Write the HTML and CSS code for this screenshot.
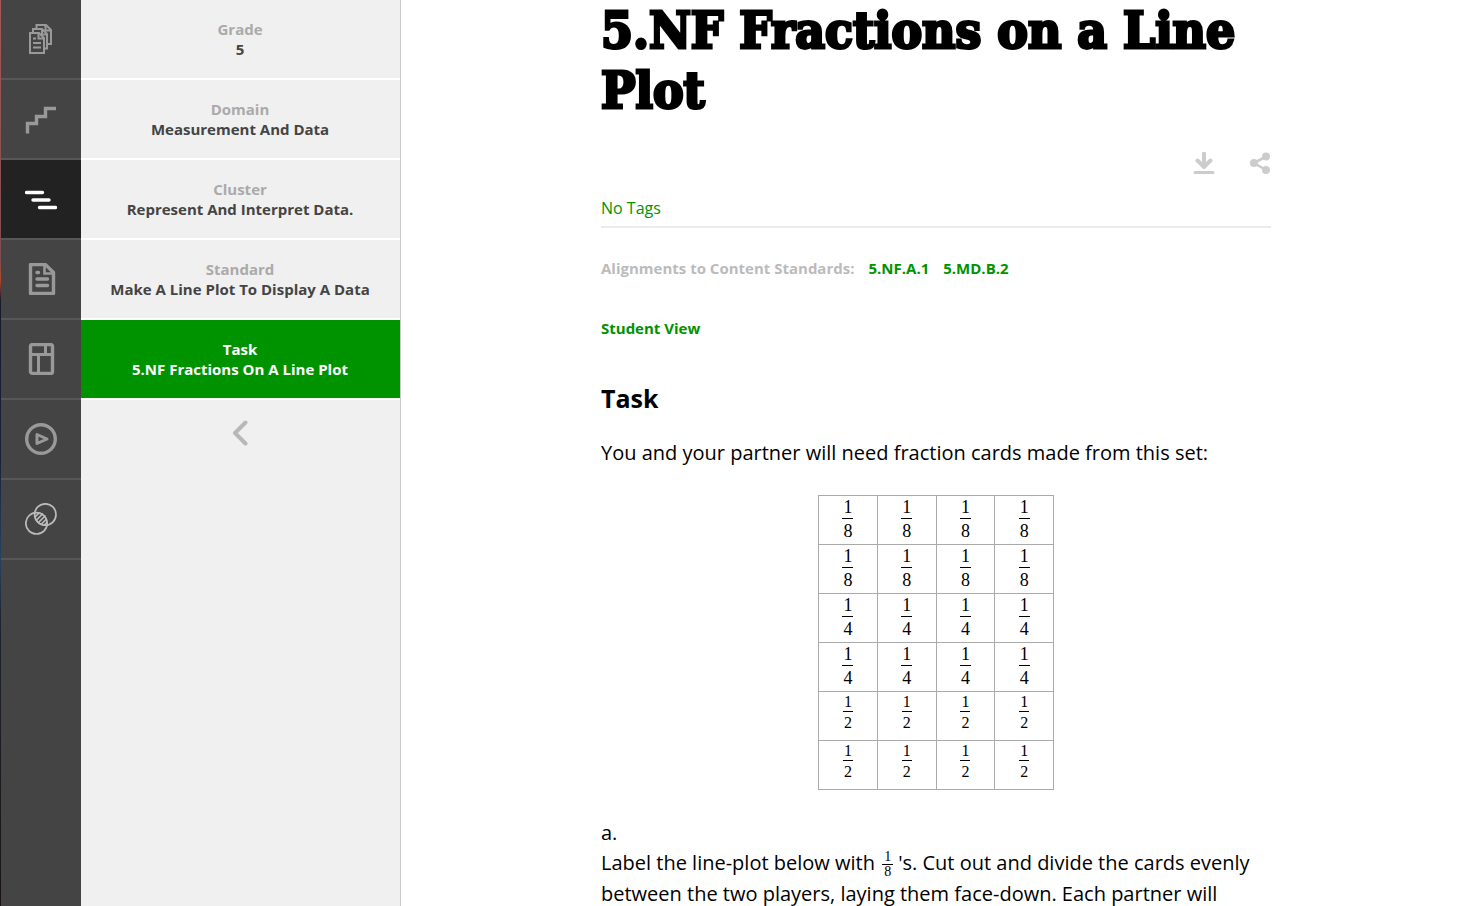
FILE: index.html
```html
<!DOCTYPE html>
<html lang="en">
<head>
<meta charset="utf-8">
<title>5.NF Fractions on a Line Plot</title>
<link rel="stylesheet" href="styles.css">
</head>
<body>
<div class="shell">
  <nav class="rail" aria-label="Sections">
    <a class="rail-item" href="#content" aria-label="Content standards"><svg class="icon" viewBox="0 0 32 32"><g stroke-width="2"><path d="M11.500 5V2H21L26 7V21H23"/><path d="M8 9V6H17L22 11V25.500H19.500"/><path d="M20.500 2.500V7.500H25.500M17 6.500V11.500H21.500"/><path d="M5 10H14L19 15V30H5Z"/><path d="M13.500 10.500V15.500H18.500M8 15.500H11M8 20H16M8 24.500H16"/></g></svg></a>
    <a class="rail-item" href="#progressions" aria-label="Progressions"><svg class="icon" viewBox="0 0 32 32"><path d="M2.500 30.500V20.500H11.500V13.500H20.500V5.500H31"/></svg></a>
    <a class="rail-item current" href="#blueprints" aria-label="Blueprints"><svg class="icon" viewBox="0 0 32 32"><path stroke-linecap="round" d="M1.500 9.500H17.500M8 17H24M14.500 24.500H30.500"/></svg></a>
    <a class="rail-item" href="#tasks" aria-label="Tasks"><svg class="icon" viewBox="0 0 32 32"><path stroke-linejoin="round" d="M5.500 1.600H20.500L28.500 9.500V30.400H5.500Z"/><path stroke-width="2.600" d="M19.500 2V10.500H28"/><path stroke-linecap="round" d="M12 9.500H13.500M12 16H22.500M12 22.500H22.500"/></svg></a>
    <a class="rail-item" href="#lessons" aria-label="Lessons"><svg class="icon" viewBox="0 0 32 32"><rect x="5.500" y="1.600" width="22" height="28.800" rx="2"/><path stroke-width="3" d="M5.500 11.500H27.500M13.500 11.500V30M20.500 2V11.500"/></svg></a>
    <a class="rail-item" href="#videos" aria-label="Videos"><svg class="icon" viewBox="0 0 32 32"><circle cx="16" cy="16" r="14.300"/><path stroke-width="3" stroke-linejoin="round" d="M12 11.500V20.500L22 16Z"/></svg></a>
    <a class="rail-item" href="#connections" aria-label="Connections"><svg class="icon light" viewBox="0 0 32 32"><g stroke-width="1.700"><circle cx="20.300" cy="11.500" r="10.700"/><circle cx="11.500" cy="20.300" r="10.700"/><path d="M10 14L14 10M11 17.500L18 10.500M13 20L20.500 12.500M16 21.500L21.500 16M19 22.500L22.500 19"/></g></svg></a>
  </nav>
  <aside class="panel" aria-label="Location">
    <a class="crumb" href="#grade"><span class="crumb-kind">Grade</span><span>5</span></a>
    <a class="crumb" href="#domain"><span class="crumb-kind">Domain</span><span>Measurement And Data</span></a>
    <a class="crumb" href="#cluster"><span class="crumb-kind">Cluster</span><span>Represent And Interpret Data.</span></a>
    <a class="crumb" href="#standard"><span class="crumb-kind">Standard</span><span>Make A Line Plot To Display A Data</span></a>
    <a class="crumb active" href="#task"><span class="crumb-kind">Task</span><span>5.NF Fractions On A Line Plot</span></a>
    <button class="collapse" type="button" aria-label="Collapse panel"><svg viewBox="0 0 16 26" width="16" height="26"><path d="M13.500 2.500L3 13L13.500 23.500" fill="none" stroke="currentColor" stroke-width="4" stroke-linecap="round" stroke-linejoin="round"/></svg></button>
  </aside>
  <main class="main">
    <article class="article">
      <h1 class="title">5.NF Fractions on a Line Plot</h1>
      <div class="actions">
        <button class="action" type="button" aria-label="Download"><svg viewBox="0 0 22 22" width="22" height="22"><path d="M11 1.500V14M4.500 8.500L11 15L17.500 8.500" fill="none" stroke="currentColor" stroke-width="4" stroke-linecap="round" stroke-linejoin="round"/><path d="M2 20.500H20" stroke="currentColor" stroke-width="3" stroke-linecap="round"/></svg></button>
        <button class="action" type="button" aria-label="Share"><svg viewBox="0 0 22 22" width="22" height="22"><path d="M17 4.500L5 11L17 18" fill="none" stroke="currentColor" stroke-width="2.600"/><g fill="currentColor"><circle cx="17" cy="4.500" r="4"/><circle cx="5" cy="11" r="4"/><circle cx="17" cy="18" r="4"/></g></svg></button>
      </div>
      <div class="tags">No Tags</div>
      <div class="alignments"><span>Alignments to Content Standards:</span><a href="#5nfa1">5.NF.A.1</a><a href="#5mdb2">5.MD.B.2</a></div>
      <a class="student" href="#student">Student View</a>
      <h2 class="heading">Task</h2>
      <p class="text">You and your partner will need fraction cards made from this set:</p>
      <table class="cards">
        <tbody>
          <tr><td><span class="frac"><span>1</span><span>8</span></span></td><td><span class="frac"><span>1</span><span>8</span></span></td><td><span class="frac"><span>1</span><span>8</span></span></td><td><span class="frac"><span>1</span><span>8</span></span></td></tr>
          <tr><td><span class="frac"><span>1</span><span>8</span></span></td><td><span class="frac"><span>1</span><span>8</span></span></td><td><span class="frac"><span>1</span><span>8</span></span></td><td><span class="frac"><span>1</span><span>8</span></span></td></tr>
          <tr><td><span class="frac"><span>1</span><span>4</span></span></td><td><span class="frac"><span>1</span><span>4</span></span></td><td><span class="frac"><span>1</span><span>4</span></span></td><td><span class="frac"><span>1</span><span>4</span></span></td></tr>
          <tr><td><span class="frac"><span>1</span><span>4</span></span></td><td><span class="frac"><span>1</span><span>4</span></span></td><td><span class="frac"><span>1</span><span>4</span></span></td><td><span class="frac"><span>1</span><span>4</span></span></td></tr>
          <tr class="halves"><td><span class="frac"><span>1</span><span>2</span></span></td><td><span class="frac"><span>1</span><span>2</span></span></td><td><span class="frac"><span>1</span><span>2</span></span></td><td><span class="frac"><span>1</span><span>2</span></span></td></tr>
          <tr class="halves"><td><span class="frac"><span>1</span><span>2</span></span></td><td><span class="frac"><span>1</span><span>2</span></span></td><td><span class="frac"><span>1</span><span>2</span></span></td><td><span class="frac"><span>1</span><span>2</span></span></td></tr>
        </tbody>
      </table>
      <p class="text">a.</p>
      <p class="text">Label the line-plot below with <span class="frac inline"><span>1</span><span>8</span></span>'s. Cut out and divide the cards evenly between the two players, laying them face-down. Each partner will</p>
    </article>
  </main>
</div>
</body>
</html>
```
FILE: styles.css
```css
* { box-sizing: border-box; }

body {
  margin: 0;
  overflow: hidden;
  background: #fff;
  color: #000;
  font-family: "Open Sans", sans-serif;
}

a { color: inherit; text-decoration: none; }

button {
  display: flex;
  padding: 0;
  border: 0;
  background: none;
  color: inherit;
  cursor: pointer;
}

.shell {
  display: grid;
  grid-template-columns: 81px 320px 1fr;
  height: 100vh;
}

.rail {
  padding-left: 1px;
  background:
    linear-gradient(#a35a50 0, #7c4d50 260px, #b0492c 280px, #171a2c 300px, #18233a 460px, #24445f 560px, #1d2431 620px, #1b1513 100%) 0 0 / 1px 100% no-repeat,
    #444;
}

.rail-item {
  display: flex;
  align-items: center;
  justify-content: center;
  height: 80px;
  border-bottom: 2px solid #575757;
  color: #999;
}

.rail-item.current { background: #222; color: #fff; }

.icon {
  width: 32px;
  height: 32px;
  fill: none;
  stroke: currentColor;
  stroke-width: 3.4;
}

.icon.light { color: #bbb; }

.panel {
  border-right: 1px solid #ccc;
  background: #f0f0f0;
}

.crumb {
  display: flex;
  flex-direction: column;
  justify-content: center;
  height: 80px;
  padding-right: 1px;
  border-bottom: 2px solid #fff;
  color: #444;
  font-size: 15px;
  font-weight: 700;
  line-height: 20px;
  text-align: center;
}

.crumb-kind { color: #aaa; }
.crumb.active { background: #009300; color: #fff; }
.crumb.active .crumb-kind { color: #fff; }

.collapse {
  margin: 20px auto 0;
  padding-right: 1px;
  color: #b8b8b8;
}

.main { min-width: 0; padding: 0 24px 0 25px; }

.article { max-width: 670px; margin: 0 auto; }

.title {
  margin: 0;
  font-family: "DejaVu Serif Condensed", "DejaVu Serif", serif;
  font-size: 51px;
  font-weight: 700;
  line-height: 60px;
  -webkit-text-stroke: 3px #000;
}

.actions {
  display: flex;
  justify-content: flex-end;
  gap: 34px;
  padding: 32px 0 24px;
  color: #ccc;
}

.tags {
  padding-bottom: 8px;
  border-bottom: 2px solid #ebebeb;
  color: #009300;
  font-size: 16px;
  line-height: 20px;
}

.alignments {
  display: flex;
  gap: 14px;
  padding: 30px 0 40px;
  color: #bbb;
  font-size: 15px;
  font-weight: 700;
  line-height: 20px;
}

.alignments a, .student { color: #009300; }

.student {
  display: block;
  font-size: 15px;
  font-weight: 700;
  line-height: 20px;
}

.heading {
  margin: 45px 0 25px;
  font-size: 25px;
  line-height: 30px;
}

.text {
  margin: 0;
  font-size: 20px;
  line-height: 30px;
}

.cards {
  width: 236px;
  margin: 27px auto 28px;
  border-collapse: collapse;
  table-layout: fixed;
}

.cards td {
  height: 49px;
  padding: 0;
  border: 1px solid #aaa;
  text-align: center;
  vertical-align: top;
  font-size: 18px;
  line-height: 21px;
}

.frac {
  display: inline-flex;
  flex-direction: column;
  align-items: center;
  font-family: "Liberation Serif", serif;
}

.frac span:first-child {
  padding: 0 1px;
  border-bottom: 1px solid currentColor;
}

.frac span:last-child { padding-top: 2px; }

.cards .halves td { font-size: 16px; line-height: 18px; }

.frac.inline {
  margin: 0 5px 0 2px;
  font-size: 14px;
  line-height: 14px;
  vertical-align: middle;
}

.frac.inline span:first-child { padding: 0 2px; }
.frac.inline span:last-child { padding-top: 0; }
```
